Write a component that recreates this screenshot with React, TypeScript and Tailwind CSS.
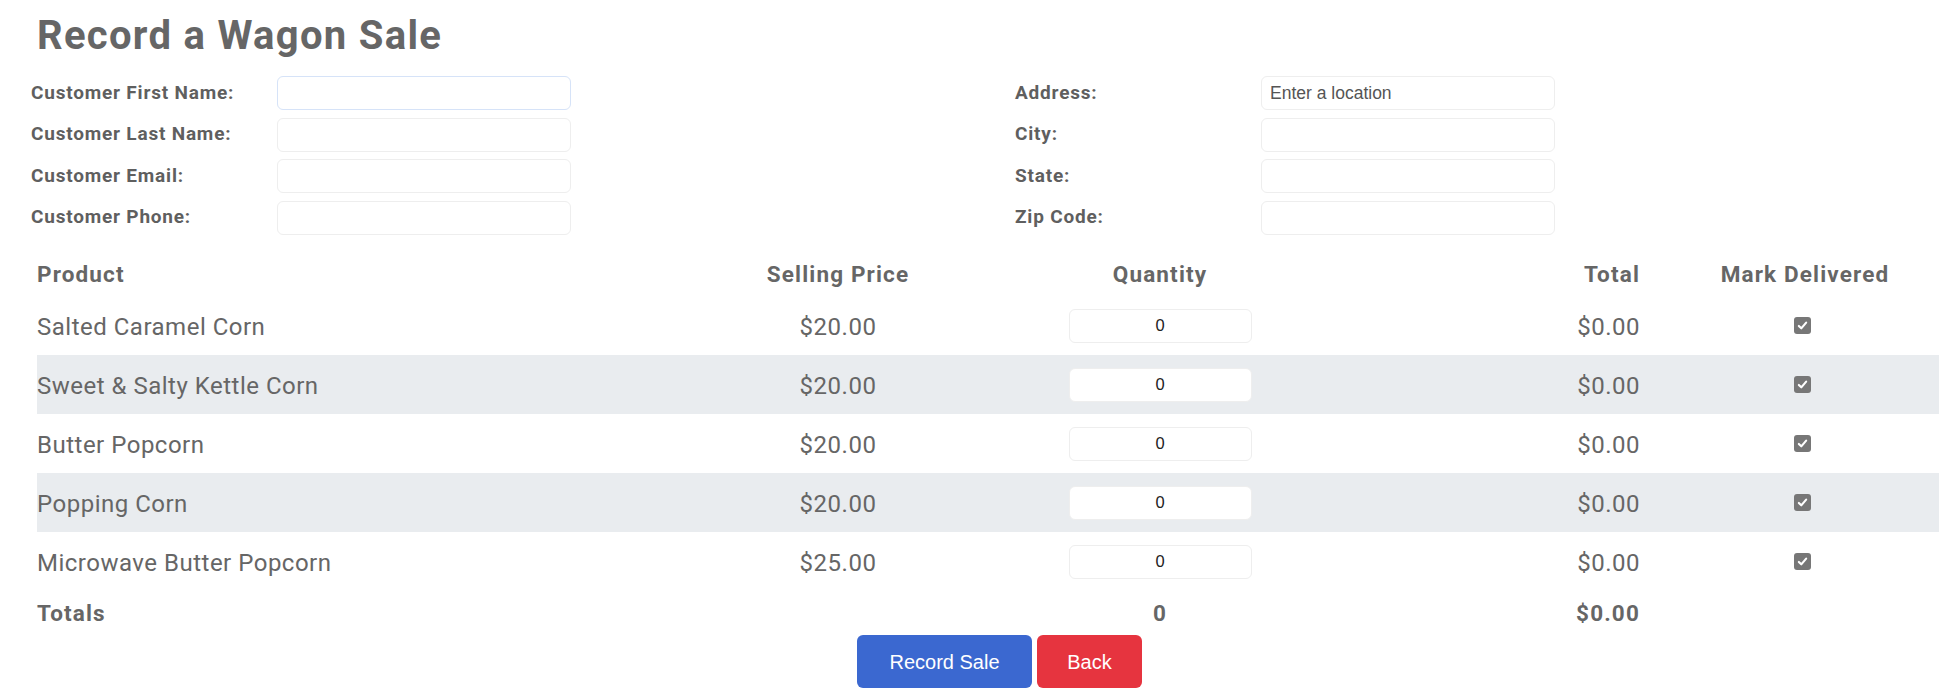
const products = [
  { name: 'Salted Caramel Corn', price: 20 },
  { name: 'Sweet & Salty Kettle Corn', price: 20 },
  { name: 'Butter Popcorn', price: 20 },
  { name: 'Popping Corn', price: 20 },
  { name: 'Microwave Butter Popcorn', price: 25 },
];

const customerFields = ['Customer First Name:', 'Customer Last Name:', 'Customer Email:', 'Customer Phone:'];
const addressFields = ['Address:', 'City:', 'State:', 'Zip Code:'];

const cols = 'grid grid-cols-[663px_276px_368px_296px_330px]';

function Field({ label, placeholder, focused }: { label: string; placeholder?: string; focused?: boolean }) {
  return (
    <div className="flex items-center h-[34px]">
      <label className="w-[246px] text-[19px] font-bold tracking-[0.8px] text-[#5f5f5f]">{label}</label>
      <input
        placeholder={placeholder}
        className={`w-[294px] h-[34px] rounded-[6px] border bg-white px-[8px] text-[17.5px] text-[#333] placeholder-[#555] outline-none font-['Liberation_Sans',Arial,sans-serif] ${
          focused ? 'border-[#d6e3f8]' : 'border-[#eeeeee]'
        }`}
      />
    </div>
  );
}

function Check() {
  return (
    <span className="inline-flex w-[17px] h-[17px] items-center justify-center rounded-[3px] bg-[#777777]">
      <svg viewBox="0 0 16 16" className="w-[13px] h-[13px]" fill="none" stroke="white" strokeWidth="2.6" strokeLinecap="round" strokeLinejoin="round">
        <path d="M3.5 8.5 L6.5 11.5 L12.5 4.5" />
      </svg>
    </span>
  );
}

export default function App() {
  const fmt = (n: number) => `$${n.toFixed(2)}`;

  return (
    <div className="w-[1939px] h-[699px] overflow-hidden bg-white font-['Roboto','Noto_Sans',sans-serif] text-[#666666]">
      <div className="w-[1968px] pl-[31px]">
        <h1 className="mt-[12px] ml-[6px] text-[40px] leading-[48px] font-bold tracking-[1.3px] text-[#666666]">Record a Wagon Sale</h1>

        <div className="flex mt-[16px]">
          <div className="w-[984px] flex flex-col gap-[7.5px]">
            {customerFields.map((f, i) => (
              <Field key={f} label={f} focused={i === 0} />
            ))}
          </div>
          <div className="flex flex-col gap-[7.5px]">
            {addressFields.map((f, i) => (
              <Field key={f} label={f} placeholder={i === 0 ? 'Enter a location' : undefined} />
            ))}
          </div>
        </div>

        <div className="ml-[6px] mt-[14.5px] w-[1962px]">
          <div className={`${cols} h-[47px] items-center pt-[4px] text-[22.5px] font-bold tracking-[1.15px]`}>
            <div>Product</div>
            <div className="text-center">Selling Price</div>
            <div className="text-center">Quantity</div>
            <div className="text-right">Total</div>
            <div className="text-center">Mark Delivered</div>
          </div>

          {products.map((p, i) => (
            <div key={p.name} className={`${cols} h-[59px] items-center text-[24px] tracking-[0.5px] ${i % 2 === 1 ? 'bg-[#e9ecef]' : ''}`}>
              <div className="pt-[2px]">{p.name}</div>
              <div className="pt-[2px] text-center">{fmt(p.price)}</div>
              <div className="flex justify-center">
                <input
                  defaultValue="0"
                  className="w-[183px] h-[34px] rounded-[6px] border border-[#eeeeee] bg-white text-center text-[16.5px] tracking-normal text-[#222] outline-none font-['Liberation_Sans',Arial,sans-serif]"
                />
              </div>
              <div className="pt-[2px] text-right">{fmt(0)}</div>
              <div className="flex justify-center pr-[6px]">
                <Check />
              </div>
            </div>
          ))}

          <div className={`${cols} h-[44px] items-center pt-[1px] text-[22.5px] font-bold tracking-[1.15px]`}>
            <div>Totals</div>
            <div />
            <div className="text-center">0</div>
            <div className="text-right">{fmt(0)}</div>
            <div />
          </div>
        </div>

        <div className="flex justify-center gap-[5px]">
          <button className="w-[175px] h-[53px] rounded-[6px] bg-[#3b68d0] text-white text-[20px] font-['Liberation_Sans',Arial,sans-serif]">
            Record Sale
          </button>
          <button className="w-[105px] h-[53px] rounded-[6px] bg-[#e6343f] text-white text-[20px] font-['Liberation_Sans',Arial,sans-serif]">
            Back
          </button>
        </div>
      </div>
    </div>
  );
}
